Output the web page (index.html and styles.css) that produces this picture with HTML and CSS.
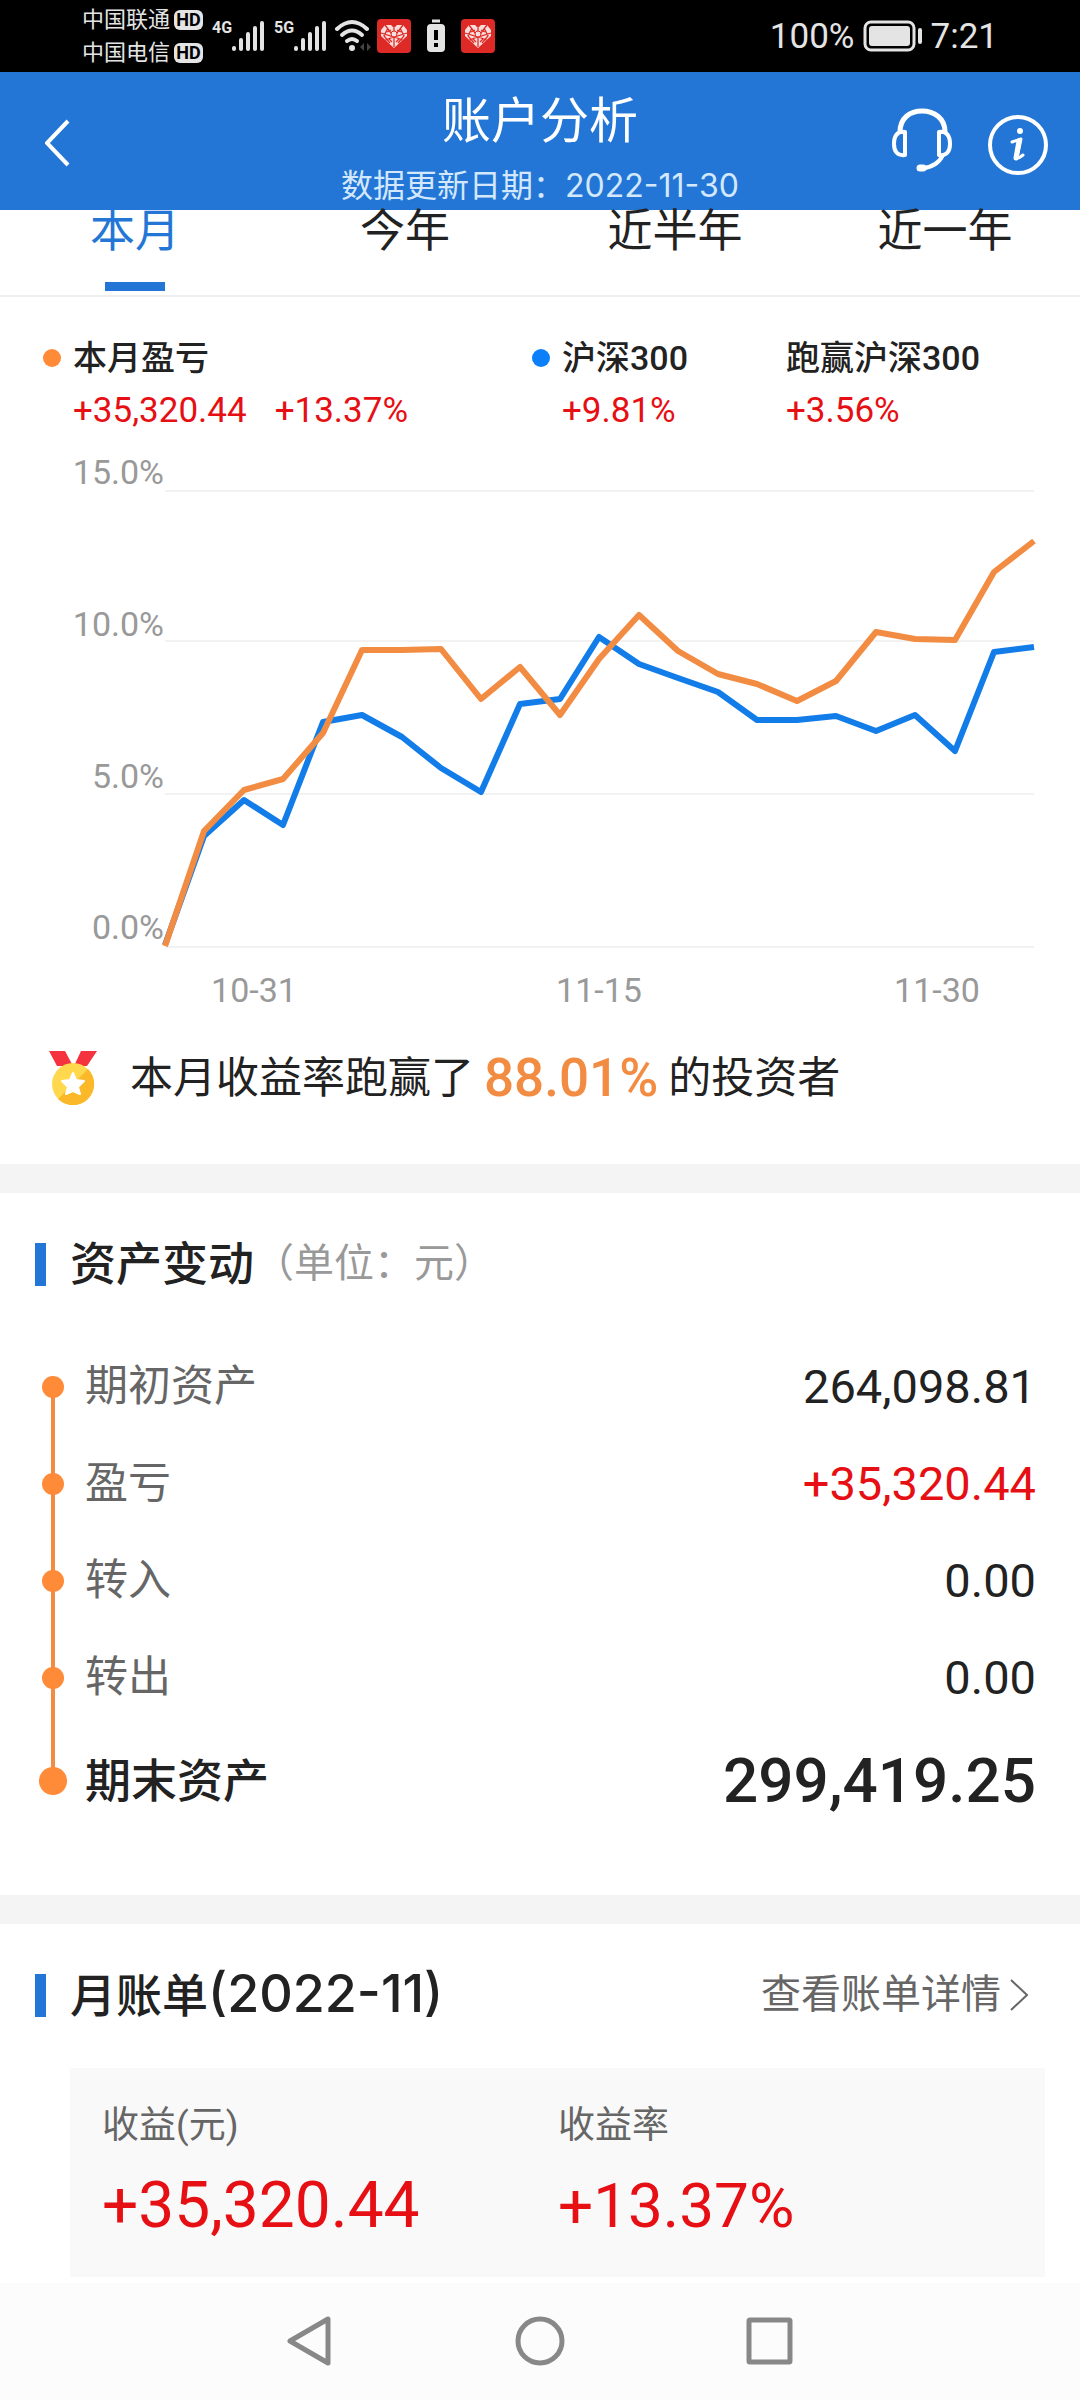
FILE: index.html
```html
<!DOCTYPE html>
<html lang="zh-CN">
<head>
<meta charset="UTF-8">
<meta name="viewport" content="width=device-width, initial-scale=1.0">
<title>账户分析</title>
<link rel="stylesheet" href="styles.css">
</head>
<body>

<!-- shared icons -->
<svg class="defs" width="0" height="0" aria-hidden="true">
    <symbol id="signal" viewBox="0 0 34 32">
        <path d="M3 29v-1M10 29v-9M17 29V14M24 29V8M31 29V3" fill="none" stroke="#e4e4e4" stroke-width="4" stroke-linecap="round"/>
    </symbol>
    <symbol id="heart" viewBox="0 0 34 34">
        <rect width="34" height="34" rx="4" fill="#de2a26"/>
        <path d="M17 29L4 17V11L8 6H14L17 9L20 6H26L30 11V17Z" fill="#f8dedb"/>
        <path d="M17 9V28M4 14L17 18L30 14M8 6L17 18L26 6M8 21L17 18L26 21M11 9L7 17L13 24M23 9L27 17L21 24M10 13L14 11M24 13L20 11M12 20L15 23M22 20L19 23" fill="none" stroke="#de2a26" stroke-width="1.3"/>
        <circle cx="17" cy="15" r="3" fill="#f8dedb" stroke="#de2a26"/>
    </symbol>
</svg>

<div class="status-bar">
    <div class="carriers">
        <div class="carrier">中国联通<b class="hd">HD</b></div>
        <div class="carrier">中国电信<b class="hd">HD</b></div>
    </div>
    <div class="network">
        <b class="net-type">4G</b>
        <svg width="34" height="32"><use href="#signal"/></svg>
    </div>
    <div class="network">
        <b class="net-type">5G</b>
        <svg width="34" height="32"><use href="#signal"/></svg>
    </div>
    <svg class="wifi" width="38" height="34" viewBox="0 0 38 34">
        <g fill="none" stroke="#e4e4e4" stroke-width="4" stroke-linecap="round">
            <path d="M3 10Q18 -4 33 10"/>
            <path d="M8 16Q18 7 28 16"/>
            <path d="M13 22Q18 18 23 22"/>
        </g>
        <circle cx="18" cy="29" r="3" fill="#e4e4e4"/>
        <path d="M30 24v8l-4-4zM33 24v8l4-4z" fill="#444"/>
    </svg>
    <svg class="app-icon" width="34" height="34"><use href="#heart"/></svg>
    <svg class="app-icon" width="20" height="34" viewBox="0 0 20 34">
        <path d="M6 2H14" stroke="#e4e4e4" stroke-width="3"/>
        <rect x="1" y="5" width="18" height="28" rx="4" fill="#e4e4e4"/>
        <path d="M10 11V21M10 24V28" stroke="#000" stroke-width="4"/>
    </svg>
    <svg class="app-icon" width="34" height="34"><use href="#heart"/></svg>
    <div class="status-right">
        <span>100%</span>
        <svg width="60" height="32" viewBox="0 0 60 32">
            <rect x="2" y="2" width="49" height="28" rx="6" fill="none" stroke="#e4e4e4" stroke-width="3"/>
            <rect x="6" y="6" width="41" height="20" rx="3" fill="#e4e4e4"/>
            <path d="M57 10V22" stroke="#e4e4e4" stroke-width="4" stroke-linecap="round"/>
        </svg>
        <span>7:21</span>
    </div>
</div>

<header class="header">
    <button type="button" class="icon-btn back-btn" aria-label="返回">
        <svg width="26" height="48" viewBox="0 0 26 48">
            <path d="M23 2L2 24L23 46" fill="none" stroke="#fff" stroke-width="4"/>
        </svg>
    </button>
    <div class="header-text">
        <h1>账户分析</h1>
        <p>数据更新日期：2022-11-30</p>
    </div>
    <div class="header-actions">
        <button type="button" class="icon-btn" aria-label="客服">
            <svg width="62" height="64" viewBox="0 0 62 64" fill="none" stroke="#fff" stroke-width="5">
                <path d="M9 24C9 10 19 3 31 3C43 3 54 10 54 24"/>
                <path d="M14 24V47C6 48 3 43 3 36C3 28 6 23 14 24Z" stroke-width="4" stroke-linejoin="round"/>
                <path d="M48 24V47C56 48 59 43 59 36C59 28 56 23 48 24Z" stroke-width="4" stroke-linejoin="round"/>
                <path d="M52 47Q46 59 32 60" stroke-width="4"/>
                <path d="M29 60H32" stroke-width="7" stroke-linecap="round"/>
            </svg>
        </button>
        <button type="button" class="icon-btn info-btn" aria-label="说明">
            <svg width="62" height="62" viewBox="0 0 62 62">
                <circle cx="31" cy="31" r="28" fill="none" stroke="#fff" stroke-width="4"/>
                <circle cx="33" cy="17" r="3" fill="#fff"/>
                <path d="M25 28L34 25L30 44Q31 45 36 41" fill="none" stroke="#fff" stroke-width="3" stroke-linejoin="round" stroke-linecap="round"/>
                <path d="M32 27L29 44" stroke="#fff" stroke-width="5" stroke-linecap="round"/>
            </svg>
        </button>
    </div>
</header>

<main>
    <nav class="tabs">
        <button type="button" class="tab active">本月</button>
        <button type="button" class="tab">今年</button>
        <button type="button" class="tab">近半年</button>
        <button type="button" class="tab">近一年</button>
    </nav>

    <section class="profit">
        <div class="legend">
            <div class="legend-item dot-orange">
                <h3>本月盈亏</h3>
                <p><span>+35,320.44</span><span>+13.37%</span></p>
            </div>
            <div class="legend-item dot-blue">
                <h3>沪深300</h3>
                <p>+9.81%</p>
            </div>
            <div class="legend-item">
                <h3>跑赢沪深300</h3>
                <p>+3.56%</p>
            </div>
        </div>

        <svg class="chart" viewBox="0 0 1080 570">
            <path class="grid-line" d="M165 51H1034M165 201H1034M165 354H1034M165 507H1034"/>
            <g class="axis axis-y">
                <text x="164" y="44">15.0%</text>
                <text x="164" y="196">10.0%</text>
                <text x="164" y="348">5.0%</text>
                <text x="164" y="499">0.0%</text>
            </g>
            <g class="axis axis-x">
                <text x="254" y="562">10-31</text>
                <text x="599" y="562">11-15</text>
                <text x="937" y="562">11-30</text>
            </g>
            <polyline class="line-blue" points="165,505 204,396 244,360 283,385 323,282 362,275 402,297 441,328 481,352 520,264 560,259 599,197 639,224 678,238 718,252 757,280 797,280 836,276 876,291 915,275 955,311 994,212 1034,207"/>
            <polyline class="line-orange" points="165,506 204,391 244,350 283,339 323,293 362,210 402,210 441,209 481,259 520,227 560,275 599,219 639,175 678,211 718,234 757,244 797,261 836,241 876,192 915,199 955,200 994,132 1034,101"/>
        </svg>

        <div class="rank">
            <svg width="48" height="54" viewBox="0 0 48 54">
                <path d="M0 0H16L24 15H8ZM48 0H32L25 15H38Z" fill="#f5333f"/>
                <circle cx="24" cy="33" r="21" fill="#ffd84d"/>
                <path d="M39 18A21 21 0 0 1 9 48Z" fill="#fbb829"/>
                <path d="M24 22L27 29L35 30L29 36L31 43L24 40L17 43L19 36L13 30L21 29Z" fill="#fff" stroke="#fff" stroke-width="2" stroke-linejoin="round"/>
            </svg>
            <span class="rank-text">本月收益率跑赢了</span>
            <strong>88.01%</strong>
            <span class="rank-text">的投资者</span>
        </div>
    </section>

    <section class="assets">
        <div class="section-title">
            <h2>资产变动</h2>
            <span class="unit">（单位：元）</span>
        </div>
        <ul class="timeline">
            <li><i class="dot"></i><span>期初资产</span><span class="value">264,098.81</span></li>
            <li><i class="dot"></i><span>盈亏</span><span class="value red">+35,320.44</span></li>
            <li><i class="dot"></i><span>转入</span><span class="value">0.00</span></li>
            <li><i class="dot"></i><span>转出</span><span class="value">0.00</span></li>
            <li class="total"><i class="dot"></i><span>期末资产</span><span class="value">299,419.25</span></li>
        </ul>
    </section>

    <section class="bill">
        <div class="section-title">
            <h2>月账单<span class="month">(2022-11)</span></h2>
            <a href="#" class="more">查看账单详情
                <svg width="20" height="32" viewBox="0 0 20 32">
                    <path d="M2 1L18 16L2 31" fill="none" stroke="#666" stroke-width="2"/>
                </svg>
            </a>
        </div>
        <div class="bill-card">
            <div>
                <h3>收益(元)</h3>
                <p class="amount">+35,320.44</p>
            </div>
            <div>
                <h3>收益率</h3>
                <p class="rate">+13.37%</p>
            </div>
        </div>
    </section>
</main>

<footer class="nav-bar">
    <button type="button" class="icon-btn" aria-label="返回键">
        <svg width="50" height="52" viewBox="0 0 50 52"><path d="M43 4V48L5 26Z"/></svg>
    </button>
    <button type="button" class="icon-btn" aria-label="主页">
        <svg width="50" height="52" viewBox="0 0 50 52"><circle cx="25" cy="26" r="22"/></svg>
    </button>
    <button type="button" class="icon-btn" aria-label="最近任务">
        <svg width="50" height="52" viewBox="0 0 50 52"><rect x="4" y="5" width="41" height="42" rx="1"/></svg>
    </button>
</footer>

</body>
</html>
```

FILE: styles.css
```css
* {
    box-sizing: border-box;
}
body {
    font-family: Roboto, "Noto Sans CJK SC", sans-serif;
    background-color: #fff;
    color: #222;
    margin: 0;
}
h1, h2, h3, p, ul {
    margin: 0;
    padding: 0;
    font-weight: normal;
}
button {
    font-family: inherit;
    background: none;
    border: none;
    padding: 0;
    cursor: pointer;
}
svg {
    display: block;
    flex-shrink: 0;
}
.defs {
    position: absolute;
}
.red {
    color: #e60f14;
}

/* status bar */
.status-bar {
    display: flex;
    align-items: center;
    height: 72px;
    padding: 0 82px 0 82px;
    background-color: #000;
    color: #e4e4e4;
}
.carrier {
    display: flex;
    align-items: center;
    gap: 4px;
    font-size: 22px;
    line-height: 33px;
}
.hd {
    width: 29px;
    border-radius: 6px;
    background-color: #e4e4e4;
    color: #000;
    font-size: 18px;
    line-height: 20px;
    text-align: center;
}
.network {
    display: flex;
    margin-left: 9px;
}
.net-type {
    width: 19px;
    font-size: 16px;
    line-height: 16px;
}
.wifi {
    margin-left: 7px;
}
.app-icon {
    margin-left: 5px;
}
.app-icon + .app-icon {
    margin-left: 15px;
}
.status-right {
    display: flex;
    align-items: center;
    gap: 8px;
    margin-left: auto;
    font-size: 35px;
}

/* header */
.header {
    display: grid;
    grid-template-columns: 1fr auto 1fr;
    height: 138px;
    padding: 0 31px;
    background-color: #2376d5;
    color: #fff;
}
.back-btn {
    justify-self: start;
    margin: -6px 0 0 14px;
}
.header-text {
    padding-top: 20px;
    text-align: center;
}
h1 {
    font-size: 49px;
    line-height: 60px;
}
.header-text p {
    font-family: Inter, "Noto Sans CJK SC", sans-serif;
    font-size: 32px;
    line-height: 68px;
    color: #d3e8fc;
}
.header-actions {
    display: flex;
    justify-content: flex-end;
    gap: 34px;
    padding-top: 36px;
    align-items: flex-start;
}
.info-btn {
    padding-top: 6px;
}

/* tabs */
.tabs {
    display: flex;
    height: 87px;
    border-bottom: 2px solid #eee;
}
.tab {
    display: flex;
    flex: 1;
    flex-direction: column;
    align-items: center;
    justify-content: flex-start;
    font-size: 45px;
    line-height: 44px;
    color: #222;
}
.tab.active {
    color: #2376d5;
}
.tab.active::after {
    content: "";
    width: 60px;
    height: 9px;
    margin-top: 28px;
    background-color: #2376d5;
}

/* profit chart */
.legend {
    display: grid;
    grid-template-columns: 489fr 224fr 294fr;
    padding: 35px 0 2px 73px;
}
.legend-item h3 {
    display: flex;
    align-items: center;
    font-size: 34px;
    font-weight: 500;
    line-height: 52px;
}
.dot-orange h3::before,
.dot-blue h3::before {
    content: "";
    width: 18px;
    height: 18px;
    margin-left: -30px;
    margin-right: 12px;
    border-radius: 50%;
    background-color: #ff8a38;
}
.dot-blue h3::before {
    background-color: #0c80f8;
}
.legend-item p {
    display: flex;
    gap: 28px;
    font-size: 35px;
    line-height: 54px;
    color: #e60f14;
}
.chart {
    width: 100%;
    height: auto;
    overflow: visible;
}
.grid-line {
    stroke: #f2f2f2;
    stroke-width: 2;
}
.axis {
    font-size: 34px;
    fill: #999;
}
.axis-y {
    text-anchor: end;
}
.axis-x {
    text-anchor: middle;
}
.line-blue,
.line-orange {
    fill: none;
    stroke: #127de8;
    stroke-width: 6;
    stroke-linejoin: round;
}
.line-orange {
    stroke: #f38c43;
}
.rank {
    display: flex;
    align-items: center;
    padding: 32px 49px 50px;
    line-height: 72px;
}
.rank-text {
    font-size: 43px;
}
.rank strong {
    margin: 0 10px;
    font-size: 53px;
    font-weight: 500;
    color: #f38c43;
}
.rank svg {
    margin-right: 33px;
}

/* sections */
.assets,
.bill {
    border-top: 29px solid #f4f4f4;
    padding: 41px 44px 59px 35px;
}
.section-title {
    display: flex;
    align-items: center;
    line-height: 60px;
}
.section-title::before {
    content: "";
    width: 11px;
    height: 43px;
    margin-right: 24px;
    background-color: #2376d5;
}
h2 {
    font-size: 46px;
    font-weight: 500;
}
.unit {
    font-size: 40px;
    color: #999;
}
.timeline {
    margin-top: 44px;
    list-style: none;
}
.timeline li {
    display: grid;
    grid-template-columns: 36px auto 1fr;
    align-items: center;
    column-gap: 14px;
    font-size: 43px;
    line-height: 97px;
    color: #666;
    /* vertical line behind the dots */
    background: linear-gradient(#f38c43, #f38c43) 16px 0 / 4px 100% no-repeat;
}
.timeline li:first-child {
    background-position: 16px 100%;
    background-size: 4px 50%;
}
.timeline .total {
    background-size: 4px 50%;
    font-size: 46px;
    font-weight: 500;
    line-height: 110px;
    color: #222;
}
.dot {
    justify-self: center;
    width: 22px;
    height: 22px;
    border-radius: 50%;
    background-color: #ff8a38;
}
.total .dot {
    width: 28px;
    height: 28px;
}
.value {
    font-size: 47px;
    text-align: right;
}
.value:not(.red) {
    color: #222;
}
.total .value {
    font-size: 62px;
}

/* monthly bill */
.bill {
    padding-right: 35px;
    padding-bottom: 6px;
}
.bill .section-title {
    height: 60px;
}
.month {
    font-family: Inter, sans-serif;
    font-size: 52px;
}
.more {
    display: flex;
    align-items: center;
    gap: 8px;
    margin-left: auto;
    padding-right: 16px;
    font-size: 40px;
    color: #666;
    text-decoration: none;
}
.bill-card {
    display: grid;
    grid-template-columns: 456fr 487fr;
    margin: 43px 0 0 35px;
    padding: 30px 0 27px 32px;
    background-color: #f9f9f9;
}
.bill-card h3 {
    font-size: 37px;
    line-height: 56px;
    color: #666;
}
.bill-card p {
    margin-top: 8px;
    font-size: 64px;
    line-height: 88px;
    color: #e60f14;
}
.bill-card .rate {
    font-size: 62px;
}

/* system navigation */
.nav-bar {
    display: flex;
    justify-content: center;
    gap: 180px;
    padding: 32px 0 33px;
    background-color: #fcfcfc;
}
.nav-bar svg {
    fill: none;
    stroke: #888;
    stroke-width: 5;
    stroke-linejoin: round;
}
```
